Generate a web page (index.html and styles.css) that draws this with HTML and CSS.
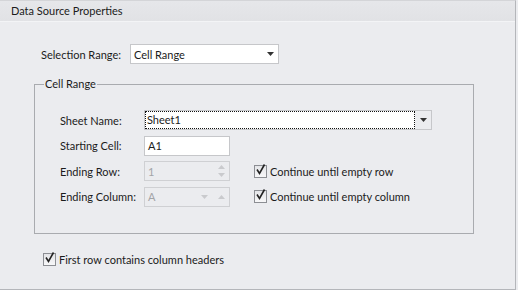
FILE: index.html
```html
<!DOCTYPE html>
<html lang="en">
<head>
  <meta charset="UTF-8">
  <title>Data Source Properties</title>
  <link rel="stylesheet" href="styles.css">
</head>
<body>
  <div class="panel">
    <div class="panel-header">Data Source Properties</div>
    <div class="panel-body">
      <div class="sel-row">
        <label class="sel-label">Selection Range:</label>
        <div class="combo sel-combo">
          <span class="combo-text">Cell Range</span>
          <span class="combo-arrow"><svg width="7" height="4" viewBox="0 0 7 4"><path d="M0 0H7L3.5 4Z" fill="#333"/></svg></span>
        </div>
      </div>

      <fieldset class="group">
        <legend>Cell Range</legend>
        <div class="field-row">
          <label class="field-label">Sheet Name:</label>
          <div class="combo sheet-combo">
            <span class="combo-text focused">Sheet1</span>
            <span class="combo-arrow"><svg width="7" height="4" viewBox="0 0 7 4"><path d="M0 0H7L3.5 4Z" fill="#333"/></svg></span>
          </div>
        </div>
        <div class="field-row">
          <label class="field-label">Starting Cell:</label>
          <div class="textbox">A1</div>
        </div>
        <div class="field-row">
          <label class="field-label">Ending Row:</label>
          <div class="textbox disabled">
            <span class="tb-text">1</span>
            <span class="spin-v">
              <svg width="7" height="4" viewBox="0 0 7 4"><path d="M0 4H7L3.5 0Z" fill="#c9cacd"/></svg>
              <svg width="7" height="4" viewBox="0 0 7 4"><path d="M0 0H7L3.5 4Z" fill="#c9cacd"/></svg>
            </span>
          </div>
          <label class="check">
            <span class="box"><svg width="13" height="13" viewBox="0 0 13 13"><path d="M3 6.5L5.5 10.5L10.5 1.5" fill="none" stroke="#222" stroke-width="1.6"/></svg></span>
            Continue until empty row
          </label>
        </div>
        <div class="field-row">
          <label class="field-label">Ending Column:</label>
          <div class="textbox disabled">
            <span class="tb-text">A</span>
            <span class="spin-h">
              <svg width="7" height="4" viewBox="0 0 7 4"><path d="M0 0H7L3.5 4Z" fill="#c9cacd"/></svg>
              <svg width="7" height="4" viewBox="0 0 7 4"><path d="M0 4H7L3.5 0Z" fill="#c9cacd"/></svg>
            </span>
          </div>
          <label class="check">
            <span class="box"><svg width="13" height="13" viewBox="0 0 13 13"><path d="M3 6.5L5.5 10.5L10.5 1.5" fill="none" stroke="#222" stroke-width="1.6"/></svg></span>
            Continue until empty column
          </label>
        </div>
      </fieldset>

      <label class="check headers-check">
        <span class="box"><svg width="13" height="13" viewBox="0 0 13 13"><path d="M3 6.5L5.5 10.5L10.5 1.5" fill="none" stroke="#222" stroke-width="1.6"/></svg></span>
        First row contains column headers
      </label>
    </div>
  </div>
</body>
</html>
```

FILE: styles.css
```css
body {
  margin: 0;
  padding: 0;
  font-family: Lato, "Open Sans", sans-serif;
  font-size: 11px;
  color: #1b1b1b;
  background: #ebecef;
  white-space: nowrap;
}

.panel {
  width: 515px;
  height: 288px;
  border-top: 1px solid #d4d5d8;
  border-right: 1px solid #b4b6ba;
  border-bottom: 1px solid #b4b6ba;
  background: #ebecef;
}

.panel-header {
  height: 20px;
  line-height: 20px;
  padding-left: 11px;
  background: linear-gradient(#e6e7ea, #e1e2e5);
  border-bottom: 1px solid #f3f4f6;
}

.panel-body {
  padding: 22px 0 0 34px;
}

.sel-row {
  display: flex;
  align-items: center;
  height: 20px;
}

.sel-label {
  width: 96px;
  padding-left: 7px;
  box-sizing: border-box;
}

.combo {
  display: flex;
  align-items: center;
  height: 20px;
  box-sizing: border-box;
  border: 1px solid #c6c7ca;
  background: #fff;
}

.combo-text {
  flex: 1;
  padding-left: 3px;
}

.combo-arrow {
  width: 16px;
  display: flex;
  justify-content: center;
}

.sel-combo {
  width: 149px;
}

.group {
  margin: 13px 0 0 0;
  padding: 19px 0 21px 25px;
  width: 440px;
  box-sizing: border-box;
  border: 1px solid #a9abaf;
}

.group legend {
  padding: 0 1px;
  margin-left: -16px;
  line-height: 14px;
}

.field-row {
  display: flex;
  align-items: center;
  height: 20px;
  margin-bottom: 5.6px;
}

.field-label {
  width: 84px;
}

.sheet-combo {
  width: 288px;
  background: linear-gradient(to right, #fff 0, #fff 270px, #ebecef 270px);
}

.focused {
  margin: 1px 1px;
  padding: 0 0 0 1px;
  height: 16px;
  line-height: 16px;
  outline: 1px dotted #111;
  background: #fff;
}

.textbox {
  display: flex;
  align-items: center;
  width: 86px;
  height: 20px;
  box-sizing: border-box;
  border: 1px solid #c6c7ca;
  background: #fff;
  padding-left: 3px;
}

.textbox.disabled {
  background: #ebecef;
  border-color: #cfd0d3;
  color: #a3a4a7;
}

.tb-text {
  flex: 1;
}

.spin-v {
  display: flex;
  flex-direction: column;
  gap: 4px;
  margin-right: 4px;
}

.spin-h {
  display: flex;
  gap: 10px;
  margin-right: 4px;
}

.check {
  display: flex;
  align-items: center;
  gap: 3px;
  margin-left: 24px;
}

.box {
  width: 13px;
  height: 13px;
  box-sizing: border-box;
  border: 1px solid #8c8e93;
  background: linear-gradient(#e4e5e8, #f7f7f8);
  display: flex;
  position: relative;
}

.box svg {
  position: absolute;
  left: -1px;
  top: -3px;
}

.headers-check {
  margin: 19px 0 0 9px;
}
```
